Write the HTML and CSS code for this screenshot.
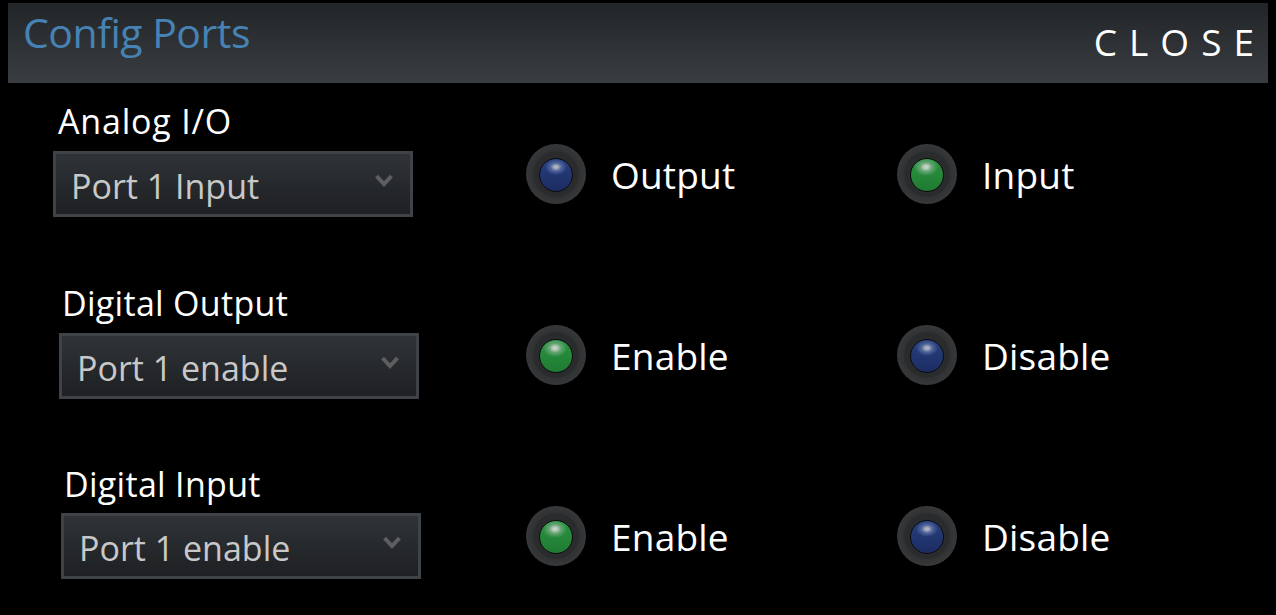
FILE: index.html
```html
<!DOCTYPE html>
<html lang="en">
<head>
<meta charset="utf-8">
<title>Config Ports</title>
<link rel="stylesheet" href="styles.css">
</head>
<body>
<header class="header">
  <h1 class="title">Config Ports</h1>
  <button class="close">CLOSE</button>
</header>
<main>
  <section class="row">
    <div class="field field-a">
      <div class="label">Analog I/O</div>
      <div class="select"><span>Port 1 Input</span><svg class="chev" viewBox="0 0 18 14"><path d="M1.5 2 9 10 16.5 2" /></svg></div>
    </div>
    <div class="option"><span class="led blue"></span><span class="opt-text">Output</span></div>
    <div class="option"><span class="led green"></span><span class="opt-text">Input</span></div>
  </section>
  <section class="row">
    <div class="field field-b">
      <div class="label">Digital Output</div>
      <div class="select"><span>Port 1 enable</span><svg class="chev" viewBox="0 0 18 14"><path d="M1.5 2 9 10 16.5 2" /></svg></div>
    </div>
    <div class="option"><span class="led green"></span><span class="opt-text">Enable</span></div>
    <div class="option"><span class="led blue"></span><span class="opt-text">Disable</span></div>
  </section>
  <section class="row">
    <div class="field field-c">
      <div class="label">Digital Input</div>
      <div class="select"><span>Port 1 enable</span><svg class="chev" viewBox="0 0 18 14"><path d="M1.5 2 9 10 16.5 2" /></svg></div>
    </div>
    <div class="option"><span class="led green"></span><span class="opt-text">Enable</span></div>
    <div class="option"><span class="led blue"></span><span class="opt-text">Disable</span></div>
  </section>
</main>
</body>
</html>
```
FILE: styles.css
```css
html, body { margin: 0; height: 615px; overflow: hidden; background: #000; }
body { padding: 3px 8px 0; box-sizing: border-box; font-family: "Open Sans", "Noto Sans", sans-serif; color: #fff; }
.header { height: 80px; display: flex; justify-content: space-between; background: linear-gradient(#222528, #393d41); }
.title { margin: 0; padding: 1px 0 0 15px; font-size: 41px; line-height: 56px; font-weight: 400; letter-spacing: -0.5px; color: #4682b4; }
.close { height: 78px; padding: 0 10px 0 0; margin: 0; border: 0; background: none; font: inherit; font-size: 37px; line-height: 78px; letter-spacing: 12px; color: #fff; margin-right: -8px; }
.row { height: 181px; display: grid; grid-template-columns: 518px 371px 1fr; align-items: center; }
.field { align-self: start; }
.field-a { padding: 15px 0 0 50px; }
.field-b { padding: 16px 0 0 54px; }
.field-c { padding: 16px 0 0 56px; }
.label { font-size: 34px; line-height: 46px; letter-spacing: 0.3px; height: 53px; }
.field-a .label { letter-spacing: 0.8px; }
.field-c .label { height: 52px; }
.field-a .select { margin-left: -5px; }
.field-b .select { margin-left: -3px; }
.field-c .select { margin-left: -3px; }
.select { width: 360px; height: 66px; box-sizing: border-box; border: 3px solid #3f4347; background: linear-gradient(#2f3337, #1e2023); display: flex; align-items: center; justify-content: space-between; padding: 0 17px 0 15px; font-size: 34px; color: #c8c8c8; }
.select span { position: relative; top: 2px; }
.chev { width: 18px; height: 14px; margin-bottom: 6px; }
.chev path { fill: none; stroke: #5c5e60; stroke-width: 4; }
.option { display: flex; align-items: center; gap: 25px; }
.opt-text { font-size: 37px; line-height: 50px; letter-spacing: 0.2px; position: relative; top: 1px; }
.led { width: 60px; height: 60px; box-sizing: border-box; border-radius: 50%; background: radial-gradient(circle closest-side, #292b2d 0 74%, #303234 78%, #36383a 100%); display: block; position: relative; }
.led::before { content: ""; position: absolute; inset: 14px 13px 12px; border-radius: 50%; border: 1px solid #0a0c0e; }
.led.blue::before { background: radial-gradient(ellipse 11px 8px at 50% 25%, #aeb3c2 0 15%, #52669c 50%, transparent 100%), linear-gradient(#27407f, #1c2c62); }
.led.green::before { background: radial-gradient(ellipse 12px 9px at 47% 25%, #c4d2c6 0 15%, #66a574 50%, transparent 100%), linear-gradient(#2a9440, #1f7a32); }
```
